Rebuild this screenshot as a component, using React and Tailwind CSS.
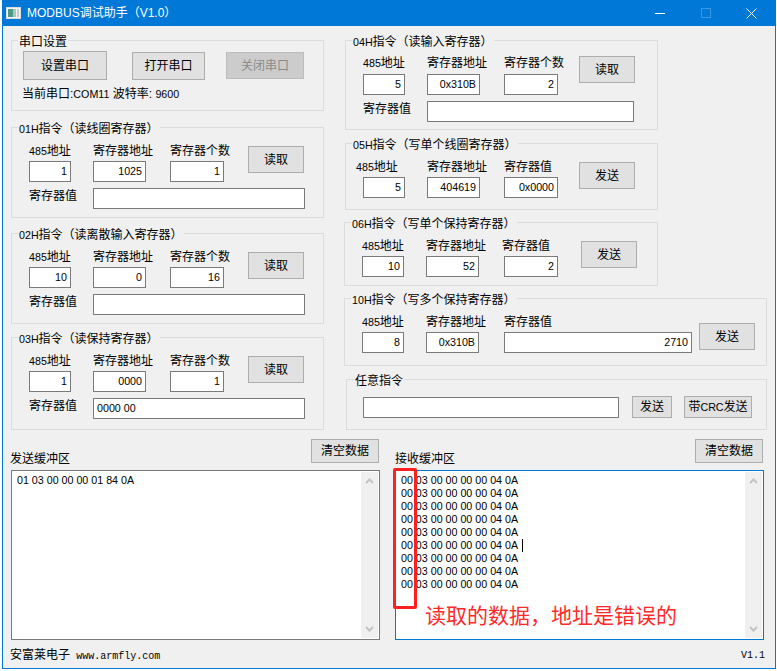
const CN = '[font-family:"Liberation_Sans","Noto_Sans_CJK_SC",sans-serif]';

const Num = ({ children }) => <span className="text-[10.7px]">{children}</span>;

const Btn = ({ children, className = '', disabled }) => (
  <button
    className={`flex shrink-0 items-center justify-center border text-[12px] ${
      disabled ? 'border-[#bcbcbc] bg-[#cccccc] text-[#8a8a8a]' : 'border-[#adadad] bg-[#e1e1e1] text-black'
    } ${className}`}
  >
    {children}
  </button>
);

const Input = ({ value, className = '', left }) => (
  <div
    className={`flex h-[21px] shrink-0 items-center border border-[#7a7a7a] bg-white px-[3px] text-[10.7px] text-black ${
      left ? 'justify-start' : 'justify-end'
    } ${className}`}
  >
    {value}
  </div>
);

const Field = ({ label, value, className = '', labelClass = '' }) => (
  <div className={`flex shrink-0 flex-col ${className}`}>
    <div className={`h-[18px] whitespace-nowrap text-[12px] leading-[16px] ${labelClass}`}>{label}</div>
    <Input value={value} />
  </div>
);

const Group = ({ title, className = '', children, titleClass = 'left-[6px]' }) => (
  <section className={`relative shrink-0 border border-[#dcdcdc] ${className}`}>
    <h3 className={`absolute -top-[6px] whitespace-nowrap bg-[#f0f0f0] px-[1px] text-[12px] font-normal leading-[14px] ${titleClass}`}>
      {title}
    </h3>
    {children}
  </section>
);

const Addr = () => (
  <>
    <Num>485</Num>地址
  </>
);

// left column read commands share the same geometry
const ReadGroup = ({ title, addr, reg, count, result, className = '' }) => (
  <Group title={title} className={`h-[91px] w-[313px] pt-[15px] ${className}`}>
    <div className="flex items-start">
      <Field label={<Addr />} value={addr} className="ml-[17px] w-[42px]" />
      <Field label="寄存器地址" value={reg} className="ml-[22px] w-[53px]" />
      <Field label="寄存器个数" value={count} className="ml-[24px] w-[54px]" />
      <Btn className="ml-[24px] mt-[3px] h-[27px] w-[56px]">读取</Btn>
    </div>
    <div className="mt-[6px] flex items-start">
      <span className="ml-[17px] mt-[1px] w-[64px] text-[12px] leading-[14px]">寄存器值</span>
      <Input value={result} left className="w-[212px]" />
    </div>
  </Group>
);

const ScrollBar = () => (
  <div className="absolute bottom-[1px] right-[1px] top-[1px] flex w-[17px] flex-col items-center justify-between bg-[#f0f0f0] py-[6px]">
    <svg width="9" height="6" viewBox="0 0 9 6" fill="none" stroke="#c4c4c4" strokeWidth="2">
      <path d="M1 5l3.5-3.5L8 5" />
    </svg>
    <svg width="9" height="6" viewBox="0 0 9 6" fill="none" stroke="#c4c4c4" strokeWidth="2">
      <path d="M1 1l3.5 3.5L8 1" />
    </svg>
  </div>
);

const rxLines = Array.from({ length: 9 });

export default function App() {
  return (
    <div className={`h-[671px] w-[777px] overflow-hidden bg-white text-black ${CN}`}>
      <div className="ml-[2px] flex h-[669px] w-[774px] flex-col border border-t-0 border-[#0078d7] bg-[#f0f0f0]">
        {/* title bar */}
        <div className="flex h-[26px] shrink-0 items-center bg-[#0078d7] text-[12px] text-white">
          <svg width="15" height="12" viewBox="0 0 15 12" className="ml-[3px] shrink-0">
            <rect x="0" y="0" width="15" height="12" fill="#dcdcdc" />
            <rect x="1" y="1" width="13" height="10" fill="#f4f4f4" />
            <rect x="2" y="2" width="5" height="8" fill="#4f9a86" />
            <rect x="7" y="2" width="3" height="8" fill="#a9c9bc" />
            <rect x="11" y="2" width="2" height="8" fill="#c4ccd2" />
          </svg>
          <span className="ml-[6px]">MODBUS调试助手（V1.0）</span>
          <div className="ml-auto flex items-center">
            <svg width="10" height="10" viewBox="0 0 10 10" stroke="#fff" fill="none" className="mr-[36px]">
              <path d="M0 5.5h10" />
            </svg>
            <svg width="10" height="10" viewBox="0 0 10 10" stroke="#3a97e0" fill="none" className="mr-[35px]">
              <rect x="0.5" y="0.5" width="9" height="9" />
            </svg>
            <svg width="11" height="11" viewBox="0 0 11 11" stroke="#fff" fill="none" className="mr-[18px]">
              <path d="M0.5 0.5l10 10M10.5 0.5l-10 10" />
            </svg>
          </div>
        </div>

        <div className="flex flex-1 flex-col text-[12px]">
          <div className="flex items-start">
            {/* left column */}
            <div className="ml-[8px] mt-[14px] flex w-[313px] flex-col">
              <Group title="串口设置" className="h-[71px] w-[313px]">
                <div className="ml-[11px] mt-[10px] flex items-start">
                  <Btn className="h-[29px] w-[84px]">设置串口</Btn>
                  <Btn className="ml-[25px] mt-[1px] h-[28px] w-[73px]">打开串口</Btn>
                  <Btn disabled className="ml-[21px] mt-[1px] h-[27px] w-[78px]">关闭串口</Btn>
                </div>
                <p className="ml-[10px] mt-[7px] leading-[14px]">
                  当前串口:<Num>COM11</Num> 波特率: <Num>9600</Num>
                </p>
              </Group>
              <ReadGroup title={<><Num>01H</Num>指令（读线圈寄存器）</>} addr="1" reg="1025" count="1" result="" className="mt-[16px]" />
              <ReadGroup title={<><Num>02H</Num>指令（读离散输入寄存器）</>} addr="10" reg="0" count="16" result="" className="mt-[15px]" />
              <ReadGroup title={<><Num>03H</Num>指令（读保持寄存器）</>} addr="1" reg="0000" count="1" result="0000 00" className="mt-[13px] h-[93px]" />
            </div>

            {/* right column */}
            <div className="ml-[20px] mt-[14px] flex flex-col">
              <Group title={<><Num>04H</Num>指令（读输入寄存器）</>} className="ml-[1px] h-[90px] w-[313px] pt-[15px]">
                <div className="flex items-start">
                  <Field label={<Addr />} value="5" className="ml-[17px] w-[42px]" labelClass="-mt-[1px] mb-[1px]" />
                  <Field label="寄存器地址" value="0x310B" className="ml-[22px] w-[53px]" labelClass="-mt-[1px] mb-[1px]" />
                  <Field label="寄存器个数" value="2" className="ml-[24px] w-[54px]" labelClass="-mt-[1px] mb-[1px]" />
                  <Btn className="ml-[21px] h-[27px] w-[56px]">读取</Btn>
                </div>
                <div className="mt-[6px] flex items-start">
                  <span className="ml-[17px] mt-[1px] w-[64px] leading-[14px]">寄存器值</span>
                  <Input value="" className="w-[207px]" />
                </div>
              </Group>

              <Group title={<><Num>05H</Num>指令（写单个线圈寄存器）</>} className="ml-[1px] mt-[13px] h-[67px] w-[313px] pt-[15px]">
                <div className="flex items-start">
                  <Field label={<Addr />} value="5" className="ml-[17px] w-[42px]" labelClass="-ml-[7px]" />
                  <Field label="寄存器地址" value="404619" className="ml-[22px] w-[53px]" />
                  <Field label="寄存器值" value="0x0000" className="ml-[24px] w-[54px]" />
                  <Btn className="ml-[21px] mt-[3px] h-[27px] w-[56px]">发送</Btn>
                </div>
              </Group>

              <Group title={<><Num>06H</Num>指令（写单个保持寄存器）</>} className="mt-[12px] h-[64px] w-[314px] pt-[15px]">
                <div className="flex items-start">
                  <Field label={<Addr />} value="10" className="ml-[17px] w-[42px]" />
                  <Field label="寄存器地址" value="52" className="ml-[22px] w-[53px]" />
                  <Field label="寄存器值" value="2" className="ml-[25px] w-[54px]" labelClass="-ml-[2px]" />
                  <Btn className="ml-[23px] mt-[3px] h-[27px] w-[56px]">发送</Btn>
                </div>
              </Group>

              <Group title={<><Num>10H</Num>指令（写多个保持寄存器）</>} className="mt-[12px] h-[68px] w-[423px] pt-[15px]">
                <div className="flex items-start">
                  <Field label={<Addr />} value="8" className="ml-[17px] w-[42px]" />
                  <Field label="寄存器地址" value="0x310B" className="ml-[22px] w-[53px]" />
                  <Field label="寄存器值" value="2710" className="ml-[25px] w-[188px]" />
                  <Btn className="ml-[7px] mt-[9px] h-[27px] w-[56px]">发送</Btn>
                </div>
              </Group>

              <Group title="任意指令" titleClass="left-[7px]" className="ml-[2px] mt-[13px] h-[51px] w-[421px]">
                <div className="mt-[17px] flex items-start">
                  <Input value="" className="ml-[16px] w-[256px]" />
                  <Btn className="ml-[13px] -mt-[1px] h-[22px] w-[40px]">发送</Btn>
                  <Btn className="ml-[12px] -mt-[1px] h-[22px] w-[68px]">带<Num>CRC</Num>发送</Btn>
                </div>
              </Group>
            </div>
          </div>

          {/* buffers */}
          <div className="mt-[9px] flex items-start">
            <div className="ml-[8px] w-[369px]">
              <div className="flex h-[31px] items-start justify-between">
                <span className="-ml-[1px] mt-[13px] leading-[14px]">发送缓冲区</span>
                <Btn className="mr-[1px] h-[24px] w-[68px]">清空数据</Btn>
              </div>
              <div className="relative h-[170px] border border-[#7a7a7a] bg-white pl-[5px] pt-[3px] text-[10.7px] leading-[13px]">
                01 03 00 00 00 01 84 0A
                <ScrollBar />
              </div>
            </div>
            <div className="ml-[15px] w-[369px]">
              <div className="flex h-[31px] items-start justify-between">
                <span className="mt-[13px] leading-[14px]">接收缓冲区</span>
                <Btn className="mr-[1px] h-[24px] w-[68px]">清空数据</Btn>
              </div>
              <div className="relative h-[170px] border border-[#0078d7] bg-white pl-[5px] pt-[3px] text-[10.7px] leading-[13px]">
                {rxLines.map((_, i) => (
                  <div key={i} className="flex items-center">
                    00 03 00 00 00 00 04 0A
                    {i === 5 && <span className="ml-[4px] h-[13px] w-px bg-black" />}
                  </div>
                ))}
                <ScrollBar />
                {/* annotation drawn over the screenshot */}
                <div className="absolute -left-[3px] -top-[3px] h-[141px] w-[24px] rounded-[2px] border-[3px] border-[#ff1f1f]" />
                <span className="absolute left-[29px] top-[132px] whitespace-nowrap text-[21px] leading-[26px] text-[#ff2a2a]">
                  读取的数据，地址是错误的
                </span>
              </div>
            </div>
          </div>

          {/* footer */}
          <div className="mt-[8px] flex items-center justify-between">
            <span className="ml-[7px] leading-[14px]">
              安富莱电子 <span className='ml-[3px] font-["Liberation_Mono"] text-[10px]'>www.armfly.com</span>
            </span>
            <span className='mr-[10px] -mt-[2px] font-["Liberation_Mono"] text-[10px]'>V1.1</span>
          </div>
        </div>
      </div>
    </div>
  );
}
